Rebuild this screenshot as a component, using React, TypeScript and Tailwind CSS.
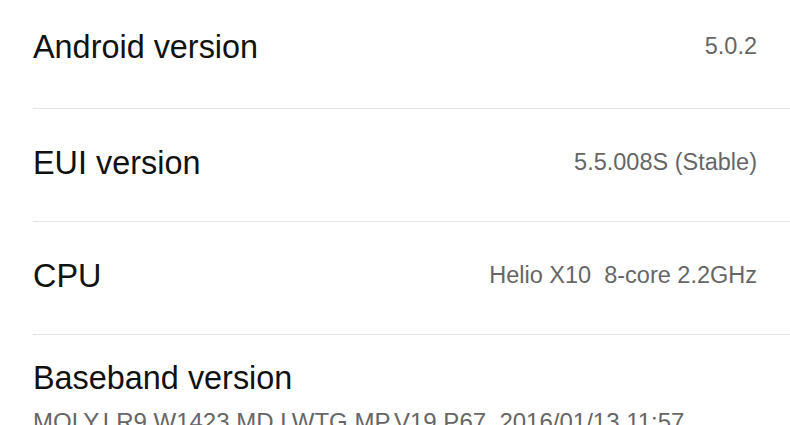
const rows = [
  { label: "Android version", value: "5.0.2" },
  { label: "EUI version", value: "5.5.008S (Stable)" },
  { label: "CPU", value: "Helio X10\u00a0\u00a08-core 2.2GHz" },
];

export default function App() {
  return (
    <div
      className="h-[425px] w-[790px] overflow-hidden bg-white pl-[33px]"
      style={{ fontFamily: '"Liberation Sans", Arial, sans-serif' }}
    >
      {rows.map((row, i) => (
        <div
          key={row.label}
          className={`flex items-center justify-between border-b border-[#e4e4e4] pr-[33px] pb-[4px] ${
            i === 0 ? "h-[109px] pb-[14px]" : "h-[113px]"
          }`}
        >
          <span className="text-[32.4px] leading-none text-[#111]">{row.label}</span>
          <span className="text-[23.5px] leading-none text-[#666]">{row.value}</span>
        </div>
      ))}
      <div className="pt-[27px]">
        <div className="text-[32.4px] leading-none text-[#111]">Baseband version</div>
        <div className="mt-[16px] whitespace-nowrap text-[24px] leading-none text-[#666]">
          MOLY.LR9.W1423.MD.LWTG.MP.V19.P67, 2016/01/13 11:57
        </div>
      </div>
    </div>
  );
}
